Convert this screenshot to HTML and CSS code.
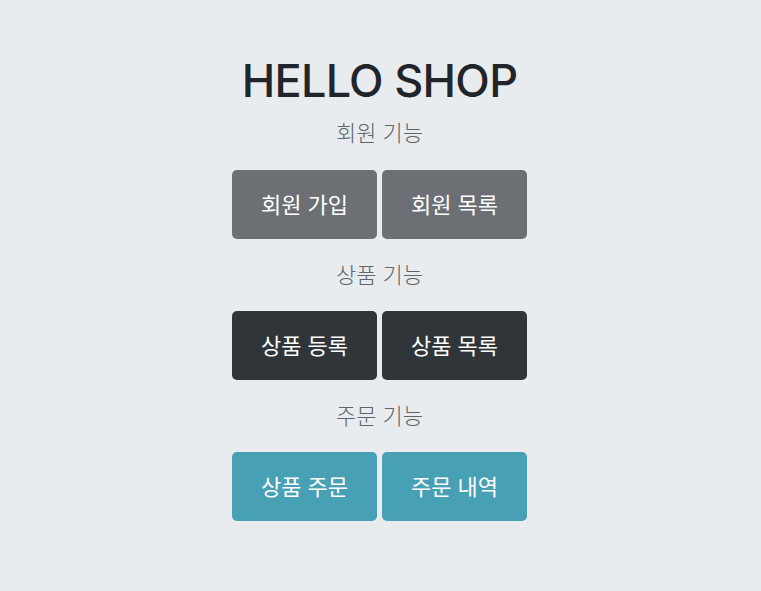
FILE: index.html
```html
<!DOCTYPE html>
<html lang="ko">
<head>
<meta charset="utf-8">
<link rel="stylesheet" href="styles.css">
</head>
<body>
<main class="page">
  <h1 class="title">HELLO SHOP</h1>
  <section class="group">
    <p class="label">회원 기능</p>
    <div class="buttons">
      <a class="btn btn-gray">회원 가입</a>
      <a class="btn btn-gray">회원 목록</a>
    </div>
  </section>
  <section class="group">
    <p class="label">상품 기능</p>
    <div class="buttons">
      <a class="btn btn-dark">상품 등록</a>
      <a class="btn btn-dark">상품 목록</a>
    </div>
  </section>
  <section class="group">
    <p class="label">주문 기능</p>
    <div class="buttons">
      <a class="btn btn-teal">상품 주문</a>
      <a class="btn btn-teal">주문 내역</a>
    </div>
  </section>
</main>
</body>
</html>
```
FILE: styles.css
```css
html, body {
  margin: 0;
  padding: 0;
}
body {
  background: #e9ecef;
  font-family: "Inter", "Noto Sans CJK KR", sans-serif;
  color: #212529;
  width: 761px;
  height: 591px;
  overflow: hidden;
}
.page {
  display: flex;
  flex-direction: column;
  align-items: center;
  padding-top: 51px;
  padding-right: 2px;
}
.title {
  margin: 0;
  font-size: 45px;
  line-height: 60px;
  font-weight: 500;
  letter-spacing: -0.7px;
  color: #212529;
}
.group {
  display: flex;
  flex-direction: column;
  align-items: center;
}
.label {
  margin: 8px 0 27px;
  font-family: "Noto Sans CJK KR", sans-serif;
  font-size: 22px;
  line-height: 24px;
  font-weight: 300;
  color: #5f656b;
}
.group + .group .label {
  margin-top: 22px;
  margin-bottom: 26px;
}
.buttons {
  display: flex;
  gap: 5px;
}
.btn {
  width: 145px;
  height: 69px;
  box-sizing: border-box;
  padding-bottom: 4px;
  display: flex;
  align-items: center;
  justify-content: center;
  border-radius: 5px;
  font-family: "Noto Sans CJK KR", sans-serif;
  font-size: 22px;
  font-weight: 400;
  color: #fff;
}
.btn-gray { background: #6c7075; }
.btn-dark { background: #30353a; }
.btn-teal { background: #48a0b5; }
```
